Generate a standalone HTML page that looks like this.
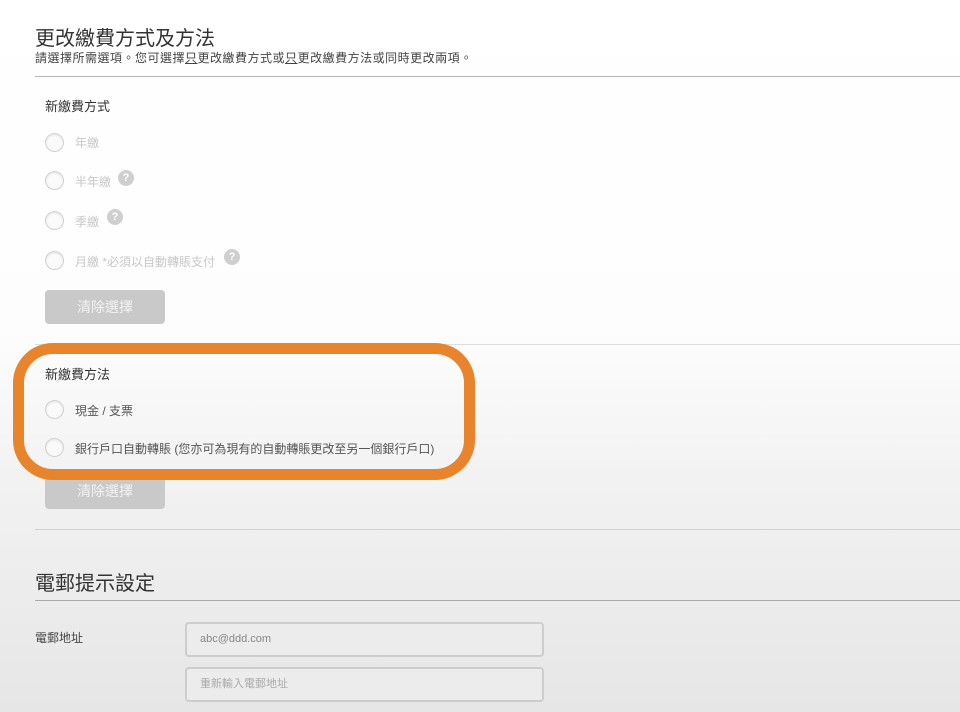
<!DOCTYPE html>
<html><head><meta charset="utf-8"><style>
*{margin:0;padding:0;box-sizing:border-box}
body{width:960px;height:712px;overflow:hidden;font-family:"Liberation Sans","Noto Sans CJK TC",sans-serif;background:linear-gradient(#fff 0px,#fdfdfd 330px,#f2f2f2 480px,#e6e6e6 712px);position:relative;color:#333}
.a{position:absolute;white-space:nowrap}
.hr{position:absolute;height:1px;background:#b5b5b5}
.r{position:absolute;width:19px;height:19px;border-radius:50%;border:1px solid #d2d2d2;background:#fafafa;box-shadow:inset 0 1px 2px rgba(0,0,0,.1)}
.lbl{font-size:12px;color:#c8c8c8}
.q{position:absolute;width:16px;height:16px;border-radius:50%;background:#cfcfcf;color:#fff;font-size:11px;font-weight:bold;text-align:center;line-height:16px}
.btn{position:absolute;width:120px;height:34px;border-radius:4px;background:#c9c9c9;color:#f2f2f2;font-size:14px;text-align:center;line-height:34px}
.inp{position:absolute;left:185px;width:359px;height:35px;border:2px solid #cdcdcd;border-radius:4px;background:#ececec;font-size:11px;color:#888;padding-left:13px;line-height:31px}
</style></head><body>
<div class="a" style="left:35px;top:22px;font-size:20px;color:#333">更改繳費方式及方法</div>
<div class="a" style="left:35px;top:49px;font-size:12px;letter-spacing:0.5px;color:#444">請選擇所需選項。您可選擇<u>只</u>更改繳費方式或<u>只</u>更改繳費方法或同時更改兩項。</div>
<div class="hr" style="left:35px;top:76px;width:925px"></div>
<div class="a" style="left:45px;top:96px;font-size:13px">新繳費方式</div>
<div class="r" style="left:45px;top:133px"></div><div class="a lbl" style="left:75px;top:134px">年繳</div>
<div class="r" style="left:45px;top:171px"></div><div class="a lbl" style="left:75px;top:173px">半年繳</div><div class="q" style="left:118px;top:170px">?</div>
<div class="r" style="left:45px;top:211px"></div><div class="a lbl" style="left:75px;top:213px">季繳</div><div class="q" style="left:107px;top:209px">?</div>
<div class="r" style="left:45px;top:251px"></div><div class="a lbl" style="left:75px;top:253px">月繳 *必須以自動轉賬支付</div><div class="q" style="left:224px;top:249px">?</div>
<div class="btn" style="left:45px;top:290px">清除選擇</div>
<div class="hr" style="left:35px;top:344px;width:925px;background:#ddd"></div>
<div class="a" style="left:45px;top:364px;font-size:13px">新繳費方法</div>
<div class="r" style="left:45px;top:400px"></div><div class="a" style="left:75px;top:402px;font-size:12px;color:#555">現金 / 支票</div>
<div class="r" style="left:45px;top:438px"></div><div class="a" style="left:75px;top:440px;font-size:12px;color:#555">銀行戶口自動轉賬 (您亦可為現有的自動轉賬更改至另一個銀行戶口)</div>
<div class="btn" style="left:45px;top:477px;height:32px;line-height:28px">清除選擇</div>
<div class="a" style="left:13px;top:343px;width:462px;height:137px;border:11px solid #e8842b;border-radius:40px"></div>
<div class="hr" style="left:35px;top:529px;width:925px;background:#d0d0d0"></div>
<div class="a" style="left:35px;top:567px;font-size:20px;color:#333">電郵提示設定</div>
<div class="hr" style="left:35px;top:600px;width:925px;background:#aaa"></div>
<div class="a" style="left:35px;top:629px;font-size:12px;color:#444">電郵地址</div>
<div class="inp" style="top:622px">abc@ddd.com</div>
<div class="inp" style="top:667px;color:#aaa">重新輸入電郵地址</div>
</body></html>
